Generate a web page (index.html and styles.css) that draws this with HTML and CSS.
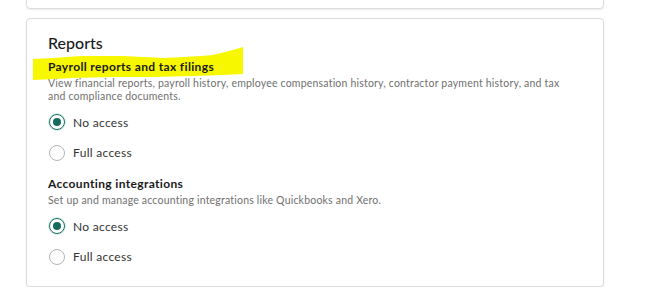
FILE: index.html
```html
<!DOCTYPE html>
<html lang="en">
<head>
  <meta charset="UTF-8" />
  <meta name="viewport" content="width=device-width, initial-scale=1.0"/>
  <title>Permissions - Reports</title>
  <link rel="stylesheet" href="styles.css">
</head>
<body>
  <div class="page">
    <!-- previous section, scrolled off -->
    <div class="card card-prev"></div>

    <div class="card card-reports">
      <h2>Reports</h2>

      <div class="group">
        <div class="group-title">
          <svg class="marker" viewBox="0 0 210 34" preserveAspectRatio="none">
            <polygon points="0,12 20,11 48,9 90,9 110,10 132,11 150,10 168,9 180,8 192,5 200,3 210,0 210,27 190,28 160,29 120,30 80,30 40,31 0,33" />
          </svg>
          <h3>Payroll reports and tax filings</h3>
        </div>
        <p class="desc">View financial reports, payroll history, employee compensation history, contractor payment history, and tax and compliance documents.</p>
        <label class="radio"><input type="radio" name="payroll" checked><span class="dot"></span>No access</label>
        <label class="radio"><input type="radio" name="payroll"><span class="dot"></span>Full access</label>
      </div>

      <div class="group">
        <h3>Accounting integrations</h3>
        <p class="desc">Set up and manage accounting integrations like Quickbooks and Xero.</p>
        <label class="radio"><input type="radio" name="accounting" checked><span class="dot"></span>No access</label>
        <label class="radio"><input type="radio" name="accounting"><span class="dot"></span>Full access</label>
      </div>
    </div>
  </div>
</body>
</html>
```

FILE: styles.css
```css
* {
  margin: 0;
  padding: 0;
  box-sizing: border-box;
}
body {
  background: #fff;
  color: #222;
  font-family: 'Lato', 'Open Sans', sans-serif;
  overflow: hidden;
}
.page {
  padding: 0 51px 0 26px;
}
.card {
  background: #fff;
  border: 1px solid #dcdcdc;
  border-radius: 4px;
  box-shadow: 0 1px 2px rgba(0,0,0,0.08);
}
.card-prev {
  height: 20px;
  margin-top: -11px;
}
.card-reports {
  margin-top: 9px;
  padding: 14px 21px 14px;
}
h2 {
  font-size: 16px;
  font-weight: 500;
  line-height: 20px;
  color: #1c1c1c;
  margin-bottom: 7px;
}
.group {
  display: flex;
  flex-direction: column;
}
.group + .group {
  margin-top: 9px;
}
.group-title {
  position: relative;
}
.marker {
  position: absolute;
  left: -15px;
  top: -13px;
  width: 210px;
  height: 34px;
  fill: #f7f700;
}
h3 {
  position: relative;
  font-size: 12px;
  font-weight: 700;
  line-height: 14px;
  letter-spacing: 0.35px;
  color: #1a1a1a;
}
.desc {
  font-size: 10.5px;
  line-height: 13px;
  letter-spacing: 0.2px;
  color: #707070;
  margin-top: 3px;
  margin-bottom: 4px;
  max-width: 524px;
}
.radio {
  display: flex;
  align-items: center;
  gap: 8px;
  height: 30.5px;
  font-size: 12px;
  letter-spacing: 0.3px;
  color: #333;
  padding-left: 1px;
}
.radio input {
  display: none;
}
.dot {
  width: 16px;
  height: 16px;
  border-radius: 50%;
  border: 1px solid #b5b5b5;
  background: #fff;
  display: flex;
  align-items: center;
  justify-content: center;
}
.radio input:checked + .dot {
  border: 1.5px solid #1c6e64;
  box-shadow: 0 0 0 1px #d6ebe8;
}
.radio input:checked + .dot::after {
  content: '';
  width: 8px;
  height: 8px;
  border-radius: 50%;
  background: #136b5f;
}
```
